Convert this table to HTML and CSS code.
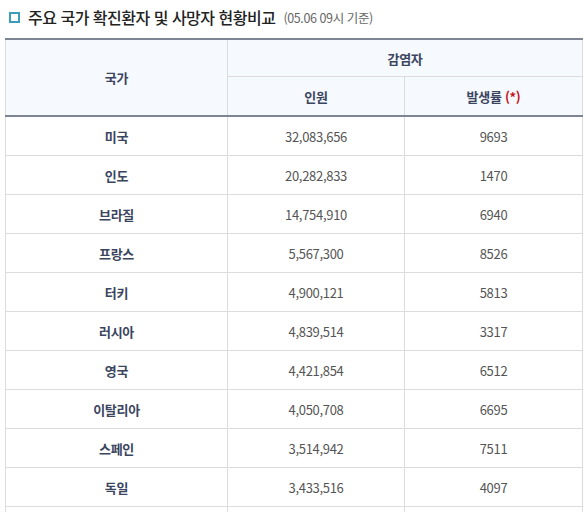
FILE: index.html
```html
<!DOCTYPE html>
<html lang="ko">
<head>
<meta charset="utf-8">
<link rel="stylesheet" href="styles.css">
</head>
<body>
<div class="page">
  <h2 class="title"><span class="box"></span><span class="main">주요 국가 확진환자 및 사망자 현황비교</span><span class="sub">(05.06 09시 기준)</span></h2>
  <table class="stats">
    <colgroup><col class="c1"><col class="c2"><col class="c3"></colgroup>
    <thead>
      <tr class="h1"><th rowspan="2">국가</th><th colspan="2">감염자</th></tr>
      <tr class="h2"><th>인원</th><th>발생률 <span class="ast">(*)</span></th></tr>
    </thead>
    <tbody>
      <tr><th>미국</th><td>32,083,656</td><td>9693</td></tr>
      <tr><th>인도</th><td>20,282,833</td><td>1470</td></tr>
      <tr><th>브라질</th><td>14,754,910</td><td>6940</td></tr>
      <tr><th>프랑스</th><td>5,567,300</td><td>8526</td></tr>
      <tr><th>터키</th><td>4,900,121</td><td>5813</td></tr>
      <tr><th>러시아</th><td>4,839,514</td><td>3317</td></tr>
      <tr><th>영국</th><td>4,421,854</td><td>6512</td></tr>
      <tr><th>이탈리아</th><td>4,050,708</td><td>6695</td></tr>
      <tr><th>스페인</th><td>3,514,942</td><td>7511</td></tr>
      <tr><th>독일</th><td>3,433,516</td><td>4097</td></tr>
      <tr><th>&nbsp;</th><td>&nbsp;</td><td>&nbsp;</td></tr>
    </tbody>
  </table>
</div>
</body>
</html>
```
FILE: styles.css
```css
html, body { margin: 0; padding: 0; background: #fff; }
body { font-family: "Noto Sans CJK KR", "Noto Sans", sans-serif; color: #555; }
.page { padding: 0 0 0 5px; width: 577px; }
.title {
  margin: 0; height: 38px; display: flex; align-items: center;
  padding: 0 0 4px 4px; box-sizing: border-box;
  font-weight: 500;
}
.box {
  width: 7px; height: 7px; border: 2px solid #3d9cb9; margin-right: 8px; flex: none;
}
.main { font-size: 16px; letter-spacing: -0.5px; color: #222; }
.sub { font-size: 12.5px; color: #666; margin-left: 8px; letter-spacing: -0.4px; font-weight: 400; }
.stats {
  width: 577px; border-collapse: collapse; table-layout: fixed;
  border-top: 2px solid #7d8594; font-size: 13px;
}
.c1 { width: 222px; } .c2 { width: 177px; } .c3 { width: 178px; }
.stats th, .stats td {
  border: 1px solid #dcdcdc; text-align: center; padding: 0; letter-spacing: -0.3px;
}
.stats thead th {
  background: #f6f9fe; color: #3b4560; font-weight: 700;
}
.h1 th { height: 36px; }
.h2 th { height: 38px; border-bottom: 2px solid #7d8594; }
.stats thead tr.h1 th[rowspan] { border-bottom: 2px solid #7d8594; }
.stats tbody th { color: #3b4560; font-weight: 700; height: 38px; }
.stats tbody td { color: #555; font-weight: 400; }
.ast { color: #c4161c; }
```
